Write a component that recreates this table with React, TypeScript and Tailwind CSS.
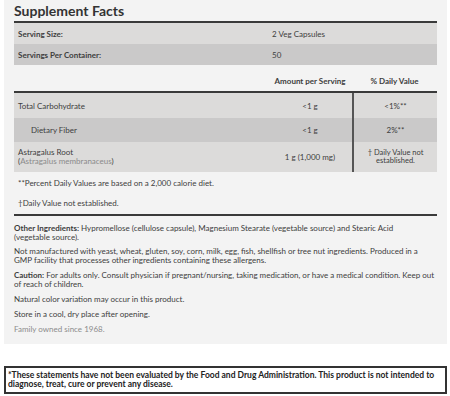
import React from "react";

const font = { fontFamily: "Lato, 'Open Sans', sans-serif" };

export default function App() {
  return (
    <div className="w-[450px] h-[396px] bg-white overflow-hidden text-[#3d3d3d]" style={font}>
      <div className="ml-[4px] w-[443px] bg-[#f3f3f3] px-[10px] pb-[10px]">
        <h2 className="h-[21px] pt-[2px] text-[14px] leading-[17px] font-bold text-[#333]">Supplement Facts</h2>
        <div className="border-t-2 border-[#3a3a3a]">
          <div className="grid grid-cols-[254px_169px] h-[21px] items-center bg-[#dcdbda] text-[8px]">
            <div className="pl-[4px] font-bold">Serving Size:</div>
            <div className="pl-[4px]">2 Veg Capsules</div>
          </div>
          <div className="grid grid-cols-[254px_169px] h-[21px] items-center bg-[#cac9c9] text-[8px]">
            <div className="pl-[4px] font-bold">Servings Per Container:</div>
            <div className="pl-[4px]">50</div>
          </div>
        </div>
        <div className="mt-[5px] grid grid-cols-[254px_84px_85px] h-[21px] items-center text-[8px] font-bold">
          <div></div>
          <div className="text-center">Amount per Serving</div>
          <div className="text-center">% Daily Value</div>
        </div>
        <div className="border-t-2 border-[#3a3a3a] text-[8px]">
          <div className="grid grid-cols-[254px_84px_85px] h-[25px] bg-[#dcdbda]">
            <div className="pl-[4px] flex items-center">Total Carbohydrate</div>
            <div className="flex items-center justify-center">&lt;1 g</div>
            <div className="flex items-center justify-center border-l-2 border-[#555]">&lt;1%**</div>
          </div>
          <div className="grid grid-cols-[254px_84px_85px] h-[24px] bg-[#cac9c9]">
            <div className="pl-[17px] flex items-center">Dietary Fiber</div>
            <div className="flex items-center justify-center">&lt;1 g</div>
            <div className="flex items-center justify-center border-l-2 border-[#555]">2%**</div>
          </div>
          <div className="grid grid-cols-[254px_84px_85px] h-[30px] bg-[#dcdbda]">
            <div className="pl-[4px] flex flex-col justify-center leading-[9px]">
              <div>Astragalus Root</div>
              <div>(<span className="text-[#8a8a8a]">Astragalus membranaceus</span>)</div>
            </div>
            <div className="flex items-center justify-center">1 g (1,000 mg)</div>
            <div className="flex flex-col items-center justify-center border-l-2 border-[#555] leading-[8px] text-center text-[7.5px]">
              <div>† Daily Value not</div>
              <div>established.</div>
            </div>
          </div>
        </div>
        <div className="text-[8px] leading-[9px] pl-[4px]">
          <p className="pt-[7px]">**Percent Daily Values are based on a 2,000 calorie diet.</p>
          <p className="pt-[11px]">†Daily Value not established.</p>
        </div>
        <div className="mt-[6px] border-t-2 border-[#3a3a3a] pt-[8px] text-[8px] leading-[9px]">
          <p className="mb-[5px]"><span className="font-bold">Other Ingredients:</span> Hypromellose (cellulose capsule), Magnesium Stearate (vegetable source) and Stearic Acid<br />(vegetable source).</p>
          <p className="mb-[6px]">Not manufactured with yeast, wheat, gluten, soy, corn, milk, egg, fish, shellfish or tree nut ingredients. Produced in a GMP facility that processes other ingredients containing these allergens.</p>
          <p className="mb-[6px]"><span className="font-bold">Caution:</span> For adults only. Consult physician if pregnant/nursing, taking medication, or have a medical condition. Keep out of reach of children.</p>
          <p className="mb-[6px]">Natural color variation may occur in this product.</p>
          <p className="mb-[6px]">Store in a cool, dry place after opening.</p>
          <p className="text-[#8c8c8c]">Family owned since 1968.</p>
        </div>
      </div>
      <div className="ml-[4px] mt-[22px] w-[443px] h-[28px] border-2 border-[#333] px-[2px] pt-[3px] text-[8.5px] leading-[9px] font-bold text-[#222]">
        *These statements have not been evaluated by the Food and Drug Administration. This product is not intended to diagnose, treat, cure or prevent any disease.
      </div>
    </div>
  );
}
